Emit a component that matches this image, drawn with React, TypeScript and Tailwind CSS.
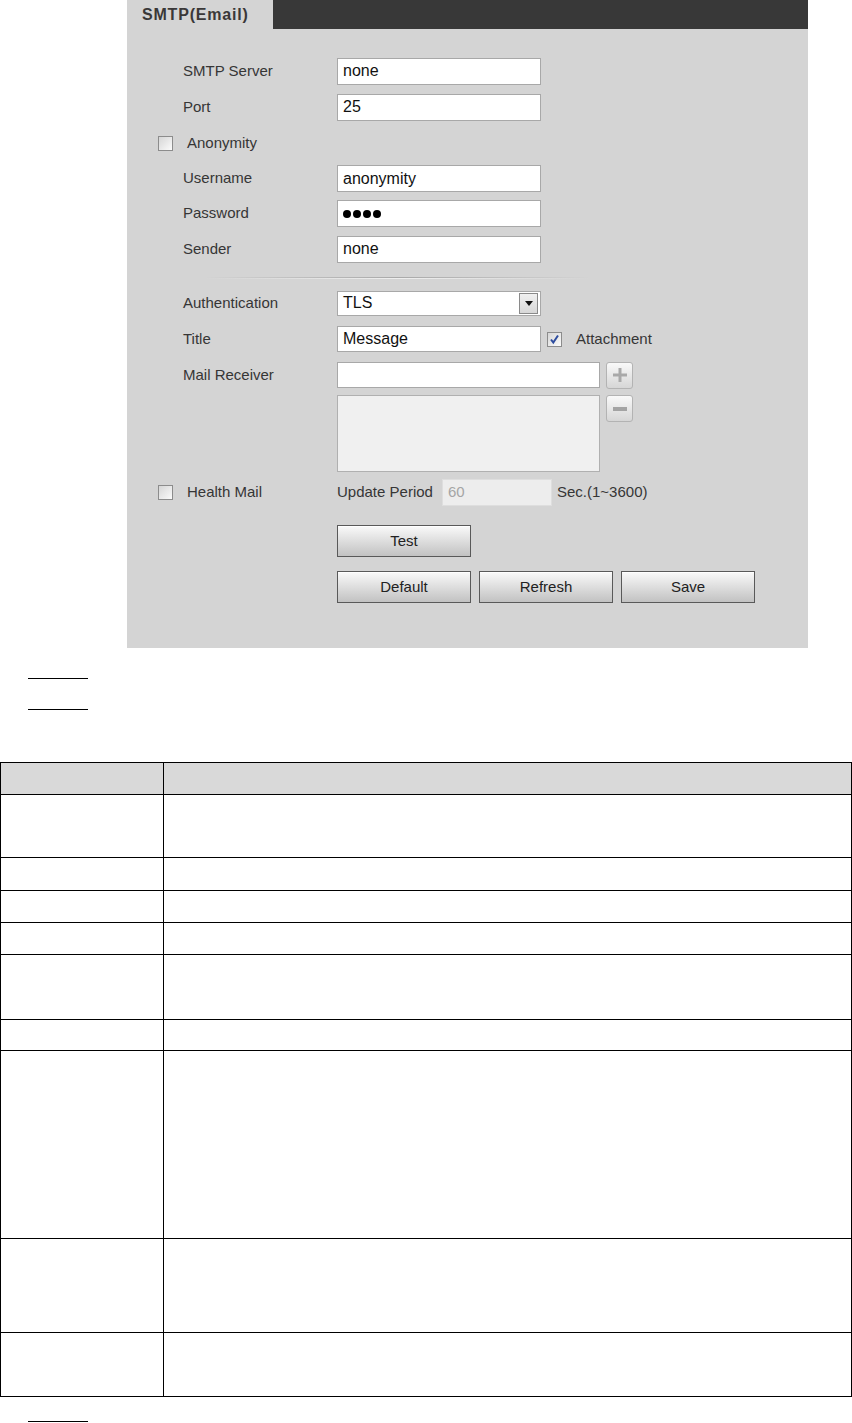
import React from "react";

const font = "font-['Liberation_Sans',Arial,sans-serif]";

function Box({ w, h, children, bg = "bg-white", text = "text-[#111]" }: { w: string; h: string; children?: React.ReactNode; bg?: string; text?: string }) {
  return (
    <div className={`${w} ${h} ${bg} ${text} border border-[#a8a8a8] flex items-center pl-[5px] text-[16px] leading-none`}>
      {children}
    </div>
  );
}

function Check({ checked = false }: { checked?: boolean }) {
  return (
    <div className="w-[15px] h-[15px] border border-[#8c8c8c] bg-linear-to-br from-[#d6d6d6] to-[#fbfbfb] flex items-center justify-center shrink-0">
      {checked && (
        <svg width="11" height="11" viewBox="0 0 11 11">
          <path d="M2 5.5 L4.3 8.6 L9 1.5" fill="none" stroke="#2d4c9e" strokeWidth="2" />
        </svg>
      )}
    </div>
  );
}

function Label({ children }: { children: React.ReactNode }) {
  return <div className="w-[210px] pl-[56px] shrink-0 text-[15px] text-[#363636]">{children}</div>;
}

function Row({ h, children }: { h: string; children: React.ReactNode }) {
  return <div className={`flex items-center ${h}`}>{children}</div>;
}

function Btn({ children }: { children: React.ReactNode }) {
  return (
    <div className="w-[134px] h-[32px] border border-[#595959] bg-linear-to-b from-[#fafafa] to-[#c2c2c2] flex items-center justify-center text-[15px] text-[#222] shadow-[inset_0_1px_0_#ffffff]">
      {children}
    </div>
  );
}

function SquareBtn({ plus }: { plus?: boolean }) {
  return (
    <div className="w-[27px] h-[27px] rounded-[3px] border border-[#b3b3b3] bg-linear-to-b from-[#f9f9f9] to-[#d6d6d6] flex items-center justify-center shrink-0">
      {plus ? (
        <svg width="14" height="14" viewBox="0 0 14 14">
          <rect x="5.5" y="0" width="3" height="14" fill="#a9a9a9" />
          <rect x="0" y="5.5" width="14" height="3" fill="#a9a9a9" />
        </svg>
      ) : (
        <svg width="14" height="14" viewBox="0 0 14 14">
          <rect x="0" y="5" width="14" height="4" fill="#a3a3a3" />
        </svg>
      )}
    </div>
  );
}

export default function App() {
  const rows = [
    { h: "h-[32px]", bg: "bg-[#d9d9d9]" },
    { h: "h-[63px]" },
    { h: "h-[33px]" },
    { h: "h-[32px]" },
    { h: "h-[32px]" },
    { h: "h-[65px]" },
    { h: "h-[31px]" },
    { h: "h-[188px]" },
    { h: "h-[94px]" },
    { h: "h-[64px]" },
  ];
  return (
    <div className={`w-[852px] min-h-[1423px] bg-white ${font}`}>
      {/* Panel */}
      <div className="ml-[127px] w-[681px] h-[648px] bg-[#d4d4d4]">
        <div className="flex h-[29px]">
          <div className="w-[146px] pl-[15px] flex items-center font-bold text-[16px] tracking-[0.8px] text-[#3a3838]">SMTP(Email)</div>
          <div className="flex-1 bg-[#383838]" />
        </div>
        <div className="pt-[24px]">
          <Row h="h-[36px]">
            <Label>SMTP Server</Label>
            <Box w="w-[204px]" h="h-[27px]">none</Box>
          </Row>
          <Row h="h-[36px]">
            <Label>Port</Label>
            <Box w="w-[204px]" h="h-[27px]">25</Box>
          </Row>
          <Row h="h-[36px]">
            <div className="w-[210px] pl-[31px] flex items-center shrink-0">
              <Check />
              <span className="ml-[14px] text-[15px] text-[#363636]">Anonymity</span>
            </div>
          </Row>
          <Row h="h-[35px]">
            <Label>Username</Label>
            <Box w="w-[204px]" h="h-[27px]">anonymity</Box>
          </Row>
          <Row h="h-[35px]">
            <Label>Password</Label>
            <Box w="w-[204px]" h="h-[27px]">
              <div className="flex gap-[2px]">
                <div className="w-[8px] h-[8px] rounded-full bg-black" />
                <div className="w-[8px] h-[8px] rounded-full bg-black" />
                <div className="w-[8px] h-[8px] rounded-full bg-black" />
                <div className="w-[8px] h-[8px] rounded-full bg-black" />
              </div>
            </Box>
          </Row>
          <Row h="h-[36px]">
            <Label>Sender</Label>
            <Box w="w-[204px]" h="h-[27px]">none</Box>
          </Row>
          <div className="h-[18px] pt-[10px] pl-[77px]">
            <div className="w-[386px] h-[1px] bg-linear-to-r from-[#d4d4d4] via-[#a9a9a9] to-[#d4d4d4]" />
            <div className="w-[386px] h-[1px] bg-linear-to-r from-[#d4d4d4] via-[#eeeeee] to-[#d4d4d4]" />
          </div>
          <Row h="h-[36px]">
            <Label>Authentication</Label>
            <div className="w-[204px] h-[25px] bg-white border border-[#a8a8a8] flex items-center justify-between pl-[5px] pr-[2px] text-[16px] text-[#111]">
              <span>TLS</span>
              <div className="w-[19px] h-[21px] border border-[#8a8a8a] bg-linear-to-b from-[#f0f0f0] to-[#d8d8d8] flex items-center justify-center">
                <svg width="8" height="5" viewBox="0 0 8 5">
                  <path d="M0 0 L8 0 L4 5 Z" fill="#111" />
                </svg>
              </div>
            </div>
          </Row>
          <Row h="h-[36px]">
            <Label>Title</Label>
            <Box w="w-[204px]" h="h-[26px]">Message</Box>
            <div className="ml-[6px]">
              <Check checked />
            </div>
            <span className="ml-[14px] text-[15px] text-[#363636]">Attachment</span>
          </Row>
          <Row h="h-[36px]">
            <Label>Mail Receiver</Label>
            <Box w="w-[263px]" h="h-[26px]" />
            <div className="ml-[6px]">
              <SquareBtn plus />
            </div>
          </Row>
          <div className="flex mt-[2px]">
            <div className="w-[210px] shrink-0" />
            <div className="w-[263px] h-[77px] bg-[#f0f0f0] border border-[#b0b0b0]" />
            <div className="ml-[6px]">
              <SquareBtn />
            </div>
          </div>
          <Row h="h-[36px] mt-[2px]">
            <div className="w-[210px] pl-[31px] flex items-center shrink-0">
              <Check />
              <span className="ml-[14px] text-[15px] text-[#363636]">Health Mail</span>
            </div>
            <span className="w-[105px] shrink-0 text-[15px] text-[#363636]">Update Period</span>
            <div className="w-[110px] h-[27px] bg-[#ededed] border border-[#dedede] flex items-center pl-[5px] text-[15px] text-[#a5a5a5]">60</div>
            <span className="ml-[5px] text-[15px] text-[#363636]">Sec.(1~3600)</span>
          </Row>
          <div className="pl-[210px] mt-[15px]">
            <Btn>Test</Btn>
          </div>
          <div className="pl-[210px] mt-[14px] flex gap-[8px]">
            <Btn>Default</Btn>
            <Btn>Refresh</Btn>
            <Btn>Save</Btn>
          </div>
        </div>
      </div>

      {/* Step underlines */}
      <div className="pt-[30px] pl-[28px]">
        <div className="w-[60px] h-[1px] bg-black" />
        <div className="w-[60px] h-[1px] bg-black mt-[30px]" />
      </div>

      {/* Table */}
      <div className="mt-[52px] w-[852px] border-t border-l border-black grid grid-cols-[163px_1fr]">
        {rows.map((r, i) => (
          <React.Fragment key={i}>
            <div className={`${r.h} ${r.bg ?? ""} border-r border-b border-black`} />
            <div className={`${r.h} ${r.bg ?? ""} border-r border-b border-black`} />
          </React.Fragment>
        ))}
      </div>

      <div className="pt-[24px] pl-[28px]">
        <div className="w-[60px] h-[1px] bg-black" />
      </div>
    </div>
  );
}
